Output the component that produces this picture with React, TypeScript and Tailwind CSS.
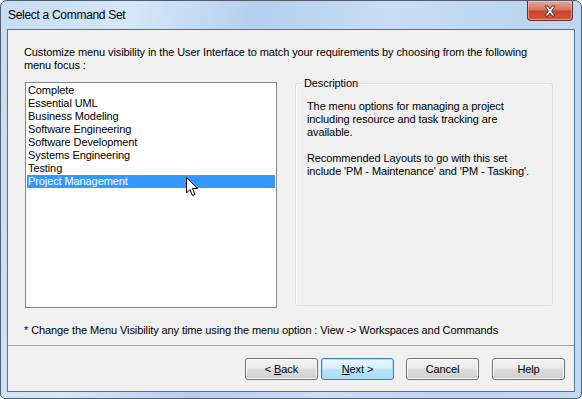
import React from 'react';

const items = [
  'Complete',
  'Essential UML',
  'Business Modeling',
  'Software Engineering',
  'Software Development',
  'Systems Engineering',
  'Testing',
  'Project Management',
];

const Btn = ({ children, primary }: { children: React.ReactNode; primary?: boolean }) => (
  <button
    className={
      primary
        ? 'w-[73px] h-[22px] rounded-[3px] border border-[#3c7fb1] bg-[linear-gradient(#eaf6fd_0%,#d9f0fc_45%,#bee6fd_50%,#a7d9f5_100%)] shadow-[inset_0_0_0_1px_#a6e0fb] text-[11px] text-black'
        : 'w-[73px] h-[22px] rounded-[3px] border border-[#707070] bg-[linear-gradient(#f2f2f2_0%,#ebebeb_45%,#dddddd_50%,#cfcfcf_100%)] shadow-[inset_0_0_0_1px_#fcfcfc] text-[11px] text-black'
    }
  >
    {children}
  </button>
);

const CloseButton = () => (
  <div className="absolute right-[8px] top-0 w-[46px] h-[20px] rounded-b-[4px] border border-t-0 border-[#6e2a23] bg-[linear-gradient(#e9a99b_0%,#d9725f_45%,#c8452f_55%,#cf5a3f_100%)] shadow-[inset_0_0_0_1px_rgba(255,210,200,0.5)] flex items-center justify-center">
    <svg width="14" height="12" viewBox="0 0 14 12">
      <path
        d="M2 1 H5 L7 4 L9 1 H12 L8.6 6 L12 11 H9 L7 8 L5 11 H2 L5.4 6 Z"
        fill="#ffffff"
        stroke="#3b3b3b"
        strokeWidth="1"
        strokeLinejoin="round"
      />
    </svg>
  </div>
);

const Cursor = () => (
  <svg className="absolute left-[160px] top-[94px]" width="13" height="20" viewBox="0 0 13 20">
    <path
      d="M0.5 0.5 V16 L4 12.5 L6.5 18.5 L9 17.5 L6.5 11.5 H11.5 Z"
      fill="#ffffff"
      stroke="#000000"
      strokeWidth="1"
      strokeLinejoin="miter"
    />
  </svg>
);

export default function App() {
  return (
    <div
      className="relative w-[582px] h-[399px] rounded-t-[7px] rounded-b-[5px] border border-[#4f5f70] bg-[linear-gradient(100deg,#c5dcf3_0%,#d6e7f8_20%,#b4d0ee_40%,#c9def4_60%,#bcd6f1_80%,#c2daf3_100%)] px-[6px] pb-[6px] flex flex-col text-black"
      style={{ fontFamily: '"Liberation Sans", Arial, sans-serif' }}
    >
      <CloseButton />
      <div className="h-[28px] flex items-center pl-[1px] text-[12px] tracking-[-0.3px] text-black">Select a Command Set</div>

      <div className="flex-1 flex flex-col border border-[#5b7089] bg-[#f0f0f0] text-[11px] leading-[13px] tracking-[-0.1px]">
        <div className="pl-[16px] pt-[16px] pr-[20px]">
          Customize menu visibility in the User Interface to match your requirements by choosing from the following
          <br />
          menu focus :
        </div>

        <div className="flex mt-[5px] pl-[17px]">
          <div className="relative mt-[5px] w-[252px] h-[226px] border border-[#828790] bg-white pt-[1px] px-[1px]">
            {items.map((it, i) => (
              <div
                key={it}
                className={
                  i === items.length - 1
                    ? 'h-[13px] pl-[1px] bg-[#3399ff] text-white'
                    : 'h-[13px] pl-[1px]'
                }
              >
                {it}
              </div>
            ))}
            <Cursor />
          </div>

          <fieldset className="ml-[18px] w-[258px] h-[229px] border border-[#d5dfe5] rounded-[3px] pl-[11px] pr-[4px] pt-[10px] shadow-[inset_1px_1px_0_#ffffff]">
            <legend className="-ml-[5px] px-[2px]">Description</legend>
            <div className="whitespace-nowrap">
              The menu options for managing a project
              <br />
              including resource and task tracking are
              <br />
              available.
            </div>
            <div className="mt-[13px] whitespace-nowrap">
              Recommended Layouts to go with this set
              <br />
              include 'PM - Maintenance' and 'PM - Tasking'.
            </div>
          </fieldset>
        </div>

        <div className="pl-[16px] mt-[16px]">
          * Change the Menu Visibility any time using the menu option : View -&gt; Workspaces and Commands
        </div>

        <div className="mt-[8px] border-t border-[#a0a0a0] flex-1 flex items-start justify-end pt-[12px] pr-[9px]">
          <Btn>
            &lt; <u>B</u>ack
          </Btn>
          <div className="ml-[3px]">
            <Btn primary>
              <u>N</u>ext &gt;
            </Btn>
          </div>
          <div className="ml-[12px]">
            <Btn>Cancel</Btn>
          </div>
          <div className="ml-[13px]">
            <Btn>Help</Btn>
          </div>
        </div>
      </div>
    </div>
  );
}
